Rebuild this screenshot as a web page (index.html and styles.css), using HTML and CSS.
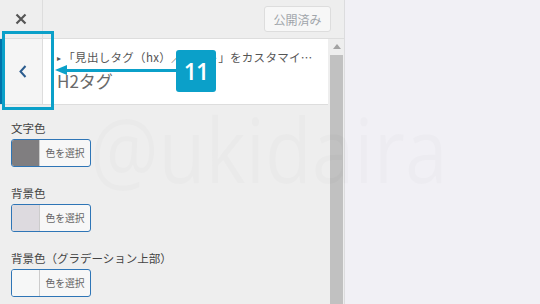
FILE: index.html
```html
<!DOCTYPE html>
<html lang="ja">
<head>
    <meta charset="UTF-8">
    <title>Customizer - H2タグ</title>
    <link rel="stylesheet" href="styles.css">
</head>
<body>
    <div class="app">
        <!-- Customizer sidebar -->
        <aside class="panel">
            <div class="topbar">
                <button class="close-btn" aria-label="閉じる">
                    <svg width="12" height="12" viewBox="0 0 12 12">
                        <path d="M1.5 1.5 L10.5 10.5 M10.5 1.5 L1.5 10.5" stroke="#555" stroke-width="2.2" fill="none"/>
                    </svg>
                </button>
                <button class="publish-btn">公開済み</button>
            </div>

            <div class="scroll-area">
                <div class="content">
                    <div class="section-head">
                        <button class="back-btn" aria-label="戻る">
                            <svg width="8" height="13" viewBox="0 0 8 13">
                                <path d="M6.5 1 L1.5 6.5 L6.5 12" stroke="#2b5c8e" stroke-width="2" fill="none"/>
                            </svg>
                        </button>
                        <div class="section-title">
                            <span class="crumb"><span class="crumb-arrow">▸</span>「見出しタグ（hx）／リスト」をカスタマイ…</span>
                            <h3>H2タグ</h3>
                        </div>
                    </div>

                    <div class="controls">
                        <div class="control">
                            <label>文字色</label>
                            <button class="picker"><span class="swatch swatch-gray"></span><span class="picker-text">色を選択</span></button>
                        </div>
                        <div class="control">
                            <label>背景色</label>
                            <button class="picker"><span class="swatch swatch-light"></span><span class="picker-text">色を選択</span></button>
                        </div>
                        <div class="control">
                            <label>背景色（グラデーション上部）</label>
                            <button class="picker"><span class="swatch swatch-white"></span><span class="picker-text">色を選択</span></button>
                        </div>
                    </div>
                </div>

                <div class="scrollbar">
                    <span class="scroll-arrow"></span>
                    <span class="scroll-thumb"></span>
                </div>
            </div>
        </aside>

        <!-- Preview area -->
        <main class="preview"></main>

        <!-- Overlays -->
        <div class="watermark">@ukidaira</div>

        <div class="callout-box"></div>
        <div class="callout-line"></div>
        <div class="callout-head"></div>
        <div class="callout-badge">11</div>
    </div>
</body>
</html>
```

FILE: styles.css
```css
/* General */
body {
    margin: 0;
    font-family: "Noto Sans CJK JP", "Noto Sans", sans-serif;
    color: #444;
}

button {
    font-family: inherit;
    cursor: pointer;
}

.app {
    position: relative;
    display: flex;
    width: 540px;
    height: 304px;
    overflow: hidden;
}

/* Sidebar */
.panel {
    width: 344px;
    border-right: 1px solid #dcdcde;
    background-color: #eee;
    display: flex;
    flex-direction: column;
}

.topbar {
    height: 38px;
    border-bottom: 1px solid #ddd;
    display: flex;
    justify-content: space-between;
    align-items: center;
    flex-shrink: 0;
}

.close-btn {
    width: 43px;
    height: 38px;
    border: none;
    border-right: 1px solid #ddd;
    background: transparent;
    padding: 0;
    display: flex;
    align-items: center;
    justify-content: center;
}

.publish-btn {
    width: 67px;
    height: 26px;
    margin-right: 13px;
    padding: 0;
    border: 1px solid #ddd;
    border-radius: 3px;
    background-color: #f7f7f7;
    color: #a0a5aa;
    font-size: 12px;
}

.scroll-area {
    flex: 1;
    display: flex;
}

.content {
    flex: 1;
}

/* Section header */
.section-head {
    height: 65px;
    display: flex;
    background-color: #fff;
    border-bottom: 1px solid #ddd;
    margin-right: 2px;
}

.back-btn {
    width: 43px;
    padding: 0;
    border: none;
    border-left: 4px solid #0073aa;
    border-right: 1px solid #ddd;
    background-color: #f5f5f5;
    display: flex;
    align-items: center;
    justify-content: center;
}

.section-title {
    padding: 9px 0 0 14px;
    white-space: nowrap;
    overflow: hidden;
}

.crumb {
    display: block;
    font-size: 11.5px;
    letter-spacing: 0.3px;
    line-height: 18px;
    color: #555;
}

.crumb-arrow {
    font-size: 8px;
    margin-right: 2px;
    vertical-align: 1px;
}

.section-title h3 {
    margin: 2px 0 0;
    font-size: 17px;
    font-weight: 400;
    line-height: 24px;
    color: #6a6a6a;
}

/* Controls */
.controls {
    padding: 14px 11px 0;
}

.control {
    margin-bottom: 17px;
}

.control label {
    display: block;
    font-size: 11.5px;
    line-height: 18px;
    color: #444;
}

.picker {
    margin-top: 2px;
    width: 80px;
    height: 28px;
    padding: 0;
    display: flex;
    border: 1px solid #2e75b6;
    border-radius: 3px;
    background-color: #f7f7f7;
    overflow: hidden;
}

.swatch {
    width: 27px;
    height: 100%;
    border-right: 1px solid #ccc;
}

.swatch-gray { background-color: #807e80; }
.swatch-light { background-color: #dddadf; }
.swatch-white { background-color: #f6f7f7; }

.picker-text {
    flex: 1;
    align-self: center;
    text-align: center;
    font-size: 9.8px;
    color: #666;
}

/* Fake scrollbar */
.scrollbar {
    width: 13px;
    margin-right: 1px;
    display: flex;
    flex-direction: column;
    align-items: center;
}

.scroll-arrow {
    margin: 5px 0 6px;
    width: 0;
    height: 0;
    border-left: 4px solid transparent;
    border-right: 4px solid transparent;
    border-bottom: 5px solid #a3a3a3;
}

.scroll-thumb {
    flex: 1;
    width: 13px;
    background-color: #c1c1c1;
}

/* Preview */
.preview {
    flex: 1;
    background-color: #f1f0f5;
}

/* Watermark */
.watermark {
    position: absolute;
    left: 90px;
    top: 88px;
    font-family: "Open Sans", sans-serif;
    font-size: 90px;
    line-height: 120px;
    color: rgba(0, 0, 0, 0.016);
    transform: scaleX(0.85);
    transform-origin: left top;
    pointer-events: none;
}

/* Annotation */
.callout-box {
    position: absolute;
    left: 2px;
    top: 31px;
    width: 46px;
    height: 73px;
    border: 3px solid #0ba0c9;
}

.callout-line {
    position: absolute;
    left: 64px;
    top: 69px;
    width: 114px;
    height: 3px;
    background-color: #0ba0c9;
}

.callout-head {
    position: absolute;
    left: 55px;
    top: 65px;
    width: 0;
    height: 0;
    border-top: 5.5px solid transparent;
    border-bottom: 5.5px solid transparent;
    border-right: 12px solid #0ba0c9;
}

.callout-badge {
    position: absolute;
    left: 176px;
    top: 50px;
    width: 40px;
    height: 42px;
    border-radius: 3px;
    background-color: #0ba0c9;
    color: #fff;
    font-family: "Open Sans", sans-serif;
    font-size: 23px;
    font-weight: 600;
    line-height: 42px;
    text-align: center;
    letter-spacing: -1px;
}
```
